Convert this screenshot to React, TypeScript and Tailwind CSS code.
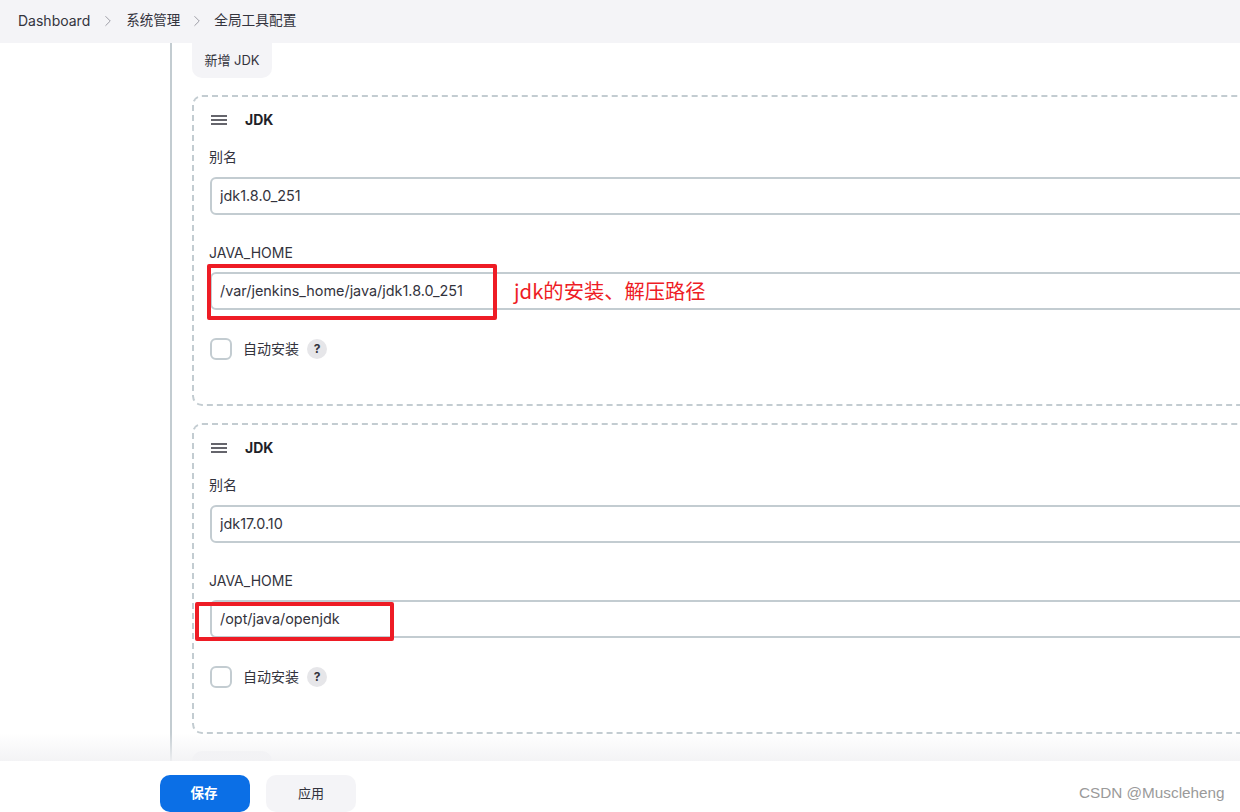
import { ChevronRight } from "lucide-react";

const fontStack = "font-['Inter','Noto_Sans_CJK_SC',sans-serif]";

function Hamburger() {
  return (
    <svg width="16" height="10" viewBox="0 0 16 10" className="shrink-0">
      <path d="M0 1h16M0 5h16M0 9h16" stroke="#33333d" strokeWidth="1.6" fill="none" />
    </svg>
  );
}

function Field({ label, value, gap, inputGap }: { label: string; value: string; gap: string; inputGap: string }) {
  return (
    <div className={gap}>
      <div className="ml-[-1px] h-[20px] text-sm leading-[20px] text-[#33333d]">{label}</div>
      <input
        readOnly
        value={value}
        className={`${inputGap} block h-[38px] w-full rounded-md border-2 border-[#c3ccd1] bg-white pb-[2px] pl-2 pr-2 text-[14.4px] text-[#33333d] outline-none`}
      />
    </div>
  );
}

function JdkCard({ alias, home, className }: { alias: string; home: string; className?: string }) {
  return (
    <div className={`h-[311px] w-[1100px] shrink-0 rounded-[10px] border-2 border-dashed border-[#c3ccd1] pl-[16px] pr-[16px] ${className ?? ""}`}>
      <div className="mt-[13px] flex h-[20px] items-center pl-[1px]">
        <Hamburger />
        <span className="ml-[18px] text-sm font-bold text-[#1f1f29]">JDK</span>
      </div>
      <Field label="别名" value={alias} gap="mt-[17px]" inputGap="mt-[10px]" />
      <Field label="JAVA_HOME" value={home} gap="mt-[28px]" inputGap="mt-[9px]" />
      <div className="mt-[28px] flex h-[22px] items-center">
        <span className="h-[22px] w-[22px] rounded-md border-2 border-[#c3ccd1] bg-white" />
        <span className="ml-[11px] text-sm text-[#33333d]">自动安装</span>
        <span className="ml-[8px] flex h-[20px] w-[20px] items-center justify-center rounded-full bg-[#e6e6e9] text-xs font-bold text-[#33333d]">?</span>
      </div>
    </div>
  );
}

export default function App() {
  return (
    <div className={`relative flex h-[812px] w-[1240px] flex-col overflow-hidden bg-white ${fontStack}`}>
      {/* Breadcrumb */}
      <div className="flex h-[43px] shrink-0 items-center bg-[#f4f4f7] pb-[2px] pl-[18px] text-sm text-[#33333d]">
        <span>Dashboard</span>
        <ChevronRight className="ml-[9px] mr-[9px] h-[18px] w-[18px] text-[#9a9aa3]" strokeWidth={1.3} />
        <span className="text-[13.5px]">系统管理</span>
        <ChevronRight className="ml-[8px] mr-[8px] h-[18px] w-[18px] text-[#9a9aa3]" strokeWidth={1.3} />
        <span className="text-[13.7px]">全局工具配置</span>
      </div>

      {/* Tool section */}
      <div className="relative flex-1 overflow-hidden">
        <div className="ml-[170px] flex h-full flex-col border-l-2 border-[#c3ccd1] pl-[20px]">
          <button className="h-[35px] w-[80px] shrink-0 rounded-b-[10px] rounded-t-none bg-[#f4f4f7] text-[13px] text-[#33333d]">新增 JDK</button>
          <JdkCard alias="jdk1.8.0_251" home="/var/jenkins_home/java/jdk1.8.0_251" className="mt-[17px]" />
          <JdkCard alias="jdk17.0.10" home="/opt/java/openjdk" className="mt-[17px]" />
          <div className="mt-[17px] h-[35px] w-[80px] shrink-0 rounded-[10px] bg-[#f4f4f7]" />
        </div>
        {/* Shadow above the bottom bar */}
        <div className="absolute inset-x-0 bottom-0 h-[28px] bg-gradient-to-b from-transparent to-[#f2f2f4]/90" />
      </div>

      {/* Bottom bar */}
      <div className="flex h-[51px] shrink-0 items-start gap-4 bg-white pl-[160px] pt-[14px]">
        <button className="h-[37px] w-[90px] rounded-[10px] bg-[#0b6fe6] pr-[2px] text-[13.5px] font-bold text-white">保存</button>
        <button className="h-[37px] w-[90px] rounded-[10px] bg-[#f4f4f7] text-[13px] text-[#33333d]">应用</button>
      </div>

      {/* Annotations pasted over the screenshot */}
      <div className="absolute left-[207px] top-[264px] h-[56px] w-[290px] rounded-[2px] border-[4px] border-[#ee1c25]" />
      <div className="absolute left-[195px] top-[602px] h-[39px] w-[199px] rounded-[2px] border-[4px] border-[#ee1c25]" />
      <div className="absolute left-[514px] top-[276px] font-['Noto_Sans_CJK_SC',sans-serif] text-[20.3px] leading-[28px] text-[#ee1c25]">jdk的安装、解压路径</div>
      <div className="absolute left-[1079px] top-[783px] font-['Liberation_Sans',sans-serif] text-[15.3px] leading-[20px] text-[#9a9a9a]">CSDN @Muscleheng</div>
    </div>
  );
}
